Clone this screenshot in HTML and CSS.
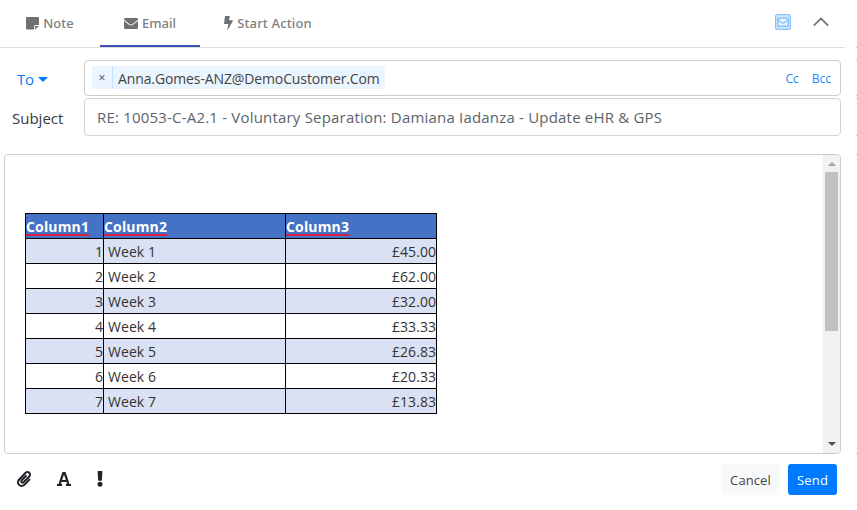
FILE: index.html
```html
<!DOCTYPE html>
<html lang="en">
<head>
<meta charset="utf-8">
<title>Email reply</title>
<link rel="stylesheet" href="styles.css">
</head>
<body>
<div class="app">
<main class="composer">
  <header class="header">
    <nav class="tabs">
      <a class="tab"><svg width="13" height="13" viewBox="0 0 13 13"><path fill="currentColor" d="M1 0h11a1 1 0 0 1 1 1v7H9.200a1 1 0 0 0-1 1v3.500H1a1 1 0 0 1-1-1V1a1 1 0 0 1 1-1zM9.200 9H13l-3.800 3.600z"/></svg><span class="t-note">Note</span></a>
      <a class="tab active"><svg width="14" height="11" viewBox="0 0 14 11"><path fill="currentColor" d="M1.200 0h11.600Q14 0 14 1.200v.5L8.500 5.900Q7 7 5.500 5.900L0 1.700v-.5Q0 0 1.200 0zM0 3l5 3.800q2 1.400 4 0L14 3v6.700q0 1.300-1.200 1.300H1.200Q0 11 0 9.700z"/></svg><span class="t-email">Email</span></a>
      <a class="tab"><svg width="9" height="14" viewBox="0 0 9 14"><path fill="currentColor" d="M1.500 0h4.300L5 4.200h3.500q.7 0 .3.700L4 13.600q-.4.600-.6-.1L4.300 8H.7Q0 8 .1 7.300L.9.600Q1 0 1.500 0z"/></svg><span class="t-action">Start Action</span></a>
    </nav>
    <div class="header-tools">
      <svg width="16" height="16" viewBox="0 0 16 16" fill="none" stroke="#7abaff"><rect x=".6" y=".6" width="14.800" height="14.800" rx="1.500" fill="#cfe6ff"/><rect x="2.800" y="4.200" width="10.400" height="8" rx=".8" fill="#edf6ff" stroke-width="1.200"/><path stroke-width="1.200" d="M3 5.700l3.500 2.900q1.500 1 3 0L13 5.700"/></svg>
      <svg width="16" height="10" viewBox="0 0 16 10" fill="none" stroke="#777" stroke-width="1.800"><path d="M.8 8.700L8 1.500l7.200 7.200"/></svg>
    </div>
  </header>
  <section class="fields">
    <div class="to-label"><span>To</span><i class="caret"></i></div>
    <div class="input to-input">
      <div class="chip"><span class="remove">×</span><span class="address">Anna.Gomes-ANZ@DemoCustomer.Com</span></div>
      <div class="copies"><span>Cc</span><span>Bcc</span></div>
    </div>
    <label class="subject-label">Subject</label>
    <div class="input subject-input"><span>RE: 10053-C-A2.1 - Voluntary Separation: Damiana Iadanza - Update eHR &amp; GPS</span></div>
  </section>
  <section class="editor">
    <div class="document">
      <table>
        <colgroup><col class="c1"><col class="c2"><col class="c3"></colgroup>
        <thead><tr><th><span>Column1</span></th><th><span>Column2</span></th><th><span>Column3</span></th></tr></thead>
        <tbody>
          <tr><td>1</td><td>Week 1</td><td>£45.00</td></tr>
          <tr><td>2</td><td>Week 2</td><td>£62.00</td></tr>
          <tr><td>3</td><td>Week 3</td><td>£32.00</td></tr>
          <tr><td>4</td><td>Week 4</td><td>£33.33</td></tr>
          <tr><td>5</td><td>Week 5</td><td>£26.83</td></tr>
          <tr><td>6</td><td>Week 6</td><td>£20.33</td></tr>
          <tr><td>7</td><td>Week 7</td><td>£13.83</td></tr>
        </tbody>
      </table>
    </div>
    <div class="scrollbar"><i class="up"></i><i class="thumb"></i><i class="down"></i></div>
  </section>
  <footer class="footer">
    <div class="format">
      <svg width="14" height="16" viewBox="0 0 448 512"><path fill="#212529" d="M43.246 466.142c-58.43-60.289-57.341-157.511 1.386-217.581L254.392 34c44.316-45.332 116.351-45.336 160.671 0 43.890 44.894 43.943 117.329 0 162.276L232.214 383.128c-29.855 30.537-78.633 30.111-107.982-.998-28.275-29.970-27.368-77.473 1.452-106.953l143.743-146.835c6.182-6.314 16.312-6.422 22.626-.241l22.861 22.379c6.315 6.182 6.422 16.312.241 22.626L171.427 319.927c-4.932 5.045-5.236 13.428-.648 18.292 4.372 4.634 11.245 4.711 15.688.165l182.849-186.851c19.613-20.062 19.613-52.725-.011-72.798-19.189-19.627-49.957-19.637-69.154 0L90.390 293.295c-34.763 35.560-35.299 93.120-1.191 128.313 34.010 35.093 88.985 35.137 123.058.286l172.060-175.999c6.177-6.319 16.307-6.433 22.626-.256l22.877 22.364c6.319 6.177 6.434 16.307.256 22.626l-172.060 175.998c-59.576 60.938-155.943 60.216-214.770-.485z"/></svg>
      <svg width="14" height="14" viewBox="0 0 14 14"><path fill="#212529" fill-rule="evenodd" d="M5.400 0h3.200l3.900 12H14v2H9v-2h1.200l-.7-2h-5l-.7 2H5v2H0v-2h1.500zM7 2.400L5.200 8h3.600z"/></svg>
      <svg width="6" height="16" viewBox="0 0 6 16"><path fill="#212529" d="M1.200 0h3.600q.6 0 .6.600L4.900 9q0 .7-.6.700H1.700q-.6 0-.6-.7L.6.600Q.6 0 1.200 0z"/><circle cx="3" cy="13.200" r="2.500" fill="#212529"/></svg>
    </div>
    <div class="actions"><button class="cancel">Cancel</button><button class="send">Send</button></div>
  </footer>
</main>
<aside class="edge"><i class="e1"></i><i class="e2"></i><i class="e3"></i><i class="e4"></i></aside>
</div>
</body>
</html>
```
FILE: styles.css
```css
* { box-sizing: border-box; }
body { margin: 0; background: #fff; color: #343a40; font-family: "Open Sans", "Noto Sans", sans-serif; font-size: 14px; }
.app { display: flex; width: 857px; height: 510px; overflow: hidden; }
.composer { width: 845px; }
svg { display: block; flex: none; }
span { white-space: nowrap; }

.header { display: flex; justify-content: space-between; height: 48px; border-bottom: 1px solid #dedede; }
.tabs { display: flex; }
.tab { display: flex; align-items: center; justify-content: center; gap: 4px; width: 100px; height: 47px; font-family: "Noto Sans", sans-serif; font-size: 13px; font-weight: 500; color: #808080; border-bottom: 2px solid transparent; }
.tab.active { border-color: #3f51b5; }
.tab:last-child { width: 136px; }
.tab svg { margin-top: 1px; color: #707070; }
.t-action { letter-spacing: .15px; }
.header-tools { display: flex; align-items: center; gap: 22px; padding: 0 16px 3px 0; }

.fields { display: grid; grid-template-columns: 84px 757px; grid-template-rows: 36px 38px; row-gap: 2px; padding-top: 12px; }
.input { display: flex; align-items: center; border: 1px solid #ccc; border-radius: 4px; }
.to-label { display: flex; align-items: center; gap: 4px; padding: 2px 0 0 17px; color: #007bff; font-size: 15px; }
.to-label span { letter-spacing: -.3px; }
.caret { border: 5px solid transparent; border-top-color: #007bff; border-bottom: 0; }
.subject-label { padding: 10px 0 0 12px; line-height: 21px; font-size: 15px; }
.to-input { justify-content: space-between; padding: 0 9px 2px 7px; }
.chip { display: flex; height: 23px; line-height: 23px; background: #ebf5ff; border-radius: 2px; color: #444; }
.remove { width: 21px; text-align: center; border-right: 1px solid #c2e0ff; font-size: 12px; }
.address { padding: 1px 5px 0; letter-spacing: -.12px; }
.copies { display: flex; gap: 13px; color: #1a88ff; font-size: 12px; padding-top: 2px; }
.subject-input { border-color: #ced4da; padding-left: 12px; color: #5c636a; font-size: 15px; letter-spacing: .195px; }

.editor { display: flex; justify-content: space-between; width: 837px; height: 300px; margin: 18px 0 0 4px; border: 1px solid #ccc; border-radius: 4px; overflow: hidden; }
.document { padding: 58px 0 0 20px; }
table { border-collapse: collapse; table-layout: fixed; width: 412px; }
.c1 { width: 78px; }
.c2 { width: 182px; }
.c3 { width: 151px; }
tr { height: 25px; }
th, td { padding: 0; border: 1px solid #000; line-height: 20px; color: #333; }
td { padding-top: 2px; letter-spacing: .05px; }
th { background: #4472c4; color: #fff; text-align: left; padding-top: 2px; letter-spacing: .15px; }
th span {
  display: block;
  width: 63px;
  background:
    repeating-linear-gradient(90deg, #ff1020 0 2px, #b03060 2px 4px) 0 17px / 100% 1px no-repeat,
    repeating-linear-gradient(90deg, #b03060 0 2px, #ff1020 2px 4px) 0 18px / 100% 1px no-repeat;
}
td:first-child, td:last-child { text-align: right; }
td:nth-child(2) { padding-left: 4px; }
tbody tr:nth-child(odd) { background: #d9e1f2; }
.scrollbar { display: flex; flex-direction: column; align-items: center; width: 17px; padding: 7px 0 7px; background: #f1f1f1; }
.up { border: 4px solid transparent; border-top: 0; border-bottom-color: #a3a3a3; }
.thumb { width: 13px; height: 159px; margin-top: 6px; background: #c1c1c1; }
.down { margin-top: auto; border: 4px solid transparent; border-bottom: 0; border-top-color: #505050; }

.footer { display: flex; justify-content: space-between; padding: 10px 8px 0 17px; }
.format { display: flex; align-items: center; height: 30px; }
.format svg:nth-child(2) { margin-left: 26px; }
.format svg:nth-child(3) { margin-left: 26px; }
.actions { display: flex; gap: 8px; }
button { height: 31px; padding: 0; border: 0; border-radius: 3px; font: 13px "Open Sans", sans-serif; }
.cancel { width: 59px; background: #f8f9fa; color: #444; letter-spacing: .1px; }
.send { width: 49px; background: #007bff; color: #fff; letter-spacing: .2px; }

.edge { width: 1px; margin-left: 11px; }
.edge i { display: block; border: solid #ccc; border-width: 1px 0; }
.e1 { height: 48px; border-top: 0 !important; }
.e2 { height: 36px; margin-top: 12px; }
.e3 { height: 38px; margin-top: 2px; }
.e4 { height: 300px; margin-top: 18px; }
```
